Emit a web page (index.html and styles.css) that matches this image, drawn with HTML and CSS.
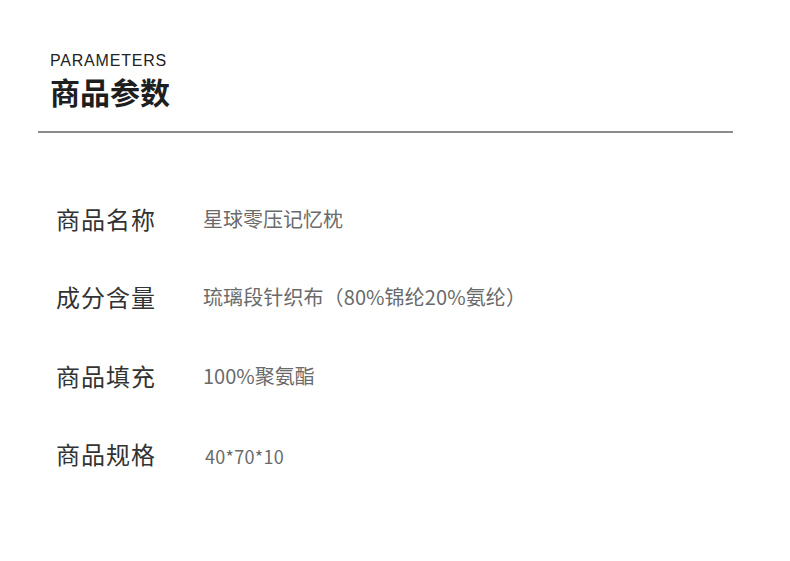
FILE: index.html
```html
<!DOCTYPE html>
<html lang="zh-CN">
<head>
<meta charset="utf-8">
<title>商品参数</title>
<link rel="stylesheet" href="styles.css">
</head>
<body>
<div class="page">
  <header class="head">
    <div class="en">PARAMETERS</div>
    <h1 class="cn">商品参数</h1>
  </header>
  <div class="rule"></div>
  <div class="params">
    <div class="row r1"><div class="label">商品名称</div><div class="value">星球零压记忆枕</div></div>
    <div class="row r2"><div class="label">成分含量</div><div class="value">琉璃段针织布（80%锦纶20%氨纶）</div></div>
    <div class="row r3"><div class="label">商品填充</div><div class="value">100%聚氨酯</div></div>
    <div class="row r4"><div class="label">商品规格</div><div class="value small">40*70*10</div></div>
  </div>
</div>
</body>
</html>
```

FILE: styles.css
```css
html, body { margin: 0; padding: 0; background: #fff; }
body { font-family: "Noto Sans CJK SC", "Noto Sans", sans-serif; }
.page { width: 790px; height: 561px; overflow: hidden; }
.head { padding: 52px 0 0 50px; }
.en {
  font-family: "Liberation Sans", Arial, sans-serif;
  font-size: 16px; line-height: 18px; letter-spacing: 0.8px; color: #222;
}
.cn {
  margin: 3px 0 0 0; font-size: 30px; line-height: 36px; font-weight: 700; color: #1e1e1e;
  letter-spacing: 0;
}
.rule { margin: 22px 0 0 38px; width: 695px; height: 2px; background: #8c8c8c; }
.params { padding: 47px 0 0 56px; display: flex; flex-direction: column; }
.row { display: flex; align-items: center; height: 78px; }
.label { width: 147px; font-size: 24px; line-height: 30px; color: #333; letter-spacing: 1px; }
.value { font-size: 20px; line-height: 28px; color: #6a6a6a; }
.r2 .value { letter-spacing: 0.1px; }
.r3 { height: 79px; }
.r4 .value { padding-top: 3px; }
.value.small { font-size: 18px; padding-left: 2px; letter-spacing: 0.3px; }
```
